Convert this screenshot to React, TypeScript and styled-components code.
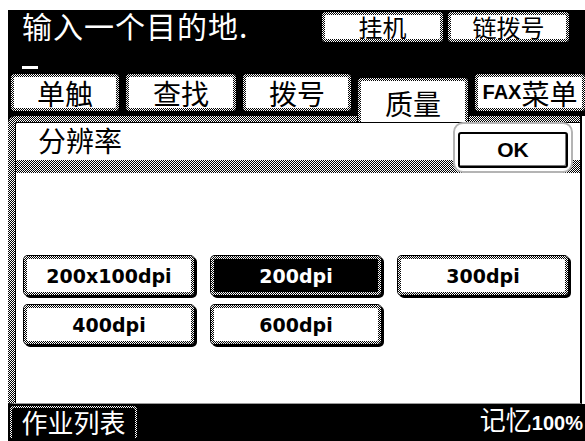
import styled, { createGlobalStyle } from "styled-components";

const CHECKER = "conic-gradient(#000 0 25%, #fff 0 50%, #000 0 75%, #fff 0) 0 0 / 2px 2px";
const CJK = `"Noto Sans CJK SC", sans-serif`;
const LATIN = `"Liberation Sans", Arial, sans-serif`;

const GlobalStyle = createGlobalStyle`
  html, body {
    margin: 0;
    padding: 0;
    background: #fff;
    overflow: hidden;
  }
`;

const Screen = styled.div`
  margin: 10px 0 0 8px;
  width: 577px;
  height: 431px;
  background: #000;
  display: flex;
  flex-direction: column;
  font-family: ${CJK};
`;

const TopBar = styled.div`
  height: 56px;
  flex-shrink: 0;
  display: flex;
  align-items: flex-start;
`;

const Prompt = styled.div`
  color: #fff;
  font-size: 30px;
  line-height: 42px;
  margin-top: -6px;
  padding-left: 14px;
  letter-spacing: 1px;
`;

const TopKeys = styled.div`
  margin-left: auto;
  margin-right: 16px;
  margin-top: 2px;
  display: flex;
  gap: 5px;
`;

const Key = styled.div<{ $w: number; $h: number; $dark?: boolean }>`
  box-sizing: border-box;
  width: ${(p) => p.$w}px;
  height: ${(p) => p.$h}px;
  border: 3px solid transparent;
  border-radius: 4px;
  background:
    linear-gradient(${(p) => (p.$dark ? "#000" : "#fff")}, ${(p) => (p.$dark ? "#000" : "#fff")}) padding-box,
    ${CHECKER} border-box;
  box-shadow: 0 0 0 1px #000, 2px 2px 0 1px #000;
  color: ${(p) => (p.$dark ? "#fff" : "#000")};
  display: flex;
  align-items: center;
  justify-content: center;
  white-space: nowrap;
`;

const CjkLabel = styled.span<{ $size?: number }>`
  font-family: ${CJK};
  font-size: ${(p) => p.$size ?? 28}px;
  line-height: 1;
`;

const Cursor = styled.div`
  width: 16px;
  height: 3px;
  flex-shrink: 0;
  background: #fff;
  margin: 0 0 4px 14px;
`;

const TabRow = styled.div`
  height: 43px;
  flex-shrink: 0;
  display: flex;
  align-items: flex-start;
  gap: 7px;
  padding-left: 3px;
`;

const Tab = styled(Key)`
  margin-top: 1px;
`;

const ActiveTab = styled.div`
  position: relative;
  z-index: 2;
  box-sizing: border-box;
  width: 110px;
  height: 44px;
  margin-top: 5px;
  border: 3px solid transparent;
  border-bottom: 0;
  border-radius: 4px 4px 0 0;
  background: linear-gradient(#fff, #fff) padding-box, ${CHECKER} border-box;
  box-shadow: 0 -1px 0 #000, -1px 0 0 #000, 1px 0 0 #000;
  display: flex;
  align-items: center;
  justify-content: center;
  padding-top: 2px;
`;

const FaxLabel = styled.span`
  font-family: ${LATIN};
  font-weight: bold;
  font-size: 20px;
`;

const Panel = styled.div`
  box-sizing: border-box;
  width: 574px;
  height: 288px;
  flex-shrink: 0;
  border-top: 6px solid transparent;
  border-left: 7px solid transparent;
  border-right: 2px solid #000;
  border-bottom: 1px solid #9a9a9a;
  border-top-left-radius: 8px;
  background: linear-gradient(#fff, #fff) padding-box, ${CHECKER} border-box;
  box-shadow: inset 1px 1px 0 #000, 3px 0 0 #fff;
`;

const PanelHead = styled.div`
  display: grid;
  grid-template-columns: 1fr 120px 7px;
  grid-template-rows: 38px 13px;
`;

const PanelTitle = styled.div`
  grid-row: 1;
  grid-column: 1;
  padding-left: 23px;
  font-size: 28px;
  line-height: 36px;
  color: #000;
`;

const Band = styled.div`
  grid-row: 2;
  grid-column: 1 / -1;
  margin-left: 1px;
  background: ${CHECKER};
`;

const OkRing = styled.div`
  grid-row: 1 / 3;
  grid-column: 2;
  z-index: 1;
  box-sizing: border-box;
  border: 2px solid #b4b4b4;
  border-radius: 10px;
  background: #fff;
  padding: 8px 3px 3px 3px;
  display: flex;
`;

const OkKey = styled.div`
  flex: 1;
  border: 2px solid #000;
  border-radius: 3px;
  box-shadow: inset -1px -1px 0 #777;
  display: flex;
  align-items: center;
  justify-content: center;
  font-family: ${LATIN};
  font-weight: bold;
  font-size: 21px;
  color: #000;
`;

const Choices = styled.div`
  display: grid;
  grid-template-columns: repeat(3, 170px);
  column-gap: 17px;
  row-gap: 10px;
  margin-top: 83px;
  padding-left: 9px;
`;

const DpiLabel = styled.span`
  font-family: "DejaVu Sans", sans-serif;
  font-weight: bold;
  font-size: 19px;
`;

const BottomBar = styled.div`
  flex: 1;
  min-height: 0;
  display: flex;
  align-items: flex-start;
  justify-content: space-between;
  padding-top: 2px;
`;

const JobKey = styled.div`
  box-sizing: border-box;
  width: 127px;
  height: 32px;
  margin-left: 2px;
  border: 2px solid transparent;
  border-bottom: 0;
  border-radius: 4px 4px 0 0;
  background: linear-gradient(#000, #000) padding-box, ${CHECKER} border-box;
  color: #fff;
  display: flex;
  justify-content: center;
  font-size: 26px;
  line-height: 28px;
`;

const Memory = styled.div`
  color: #fff;
  display: flex;
  align-items: baseline;
  padding-right: 2px;
  line-height: 28px;
`;

const MemoryPct = styled.span`
  font-family: ${LATIN};
  font-weight: bold;
  font-size: 20px;
`;

const resolutions = ["200x100dpi", "200dpi", "300dpi", "400dpi", "600dpi"];

export default function App() {
  return (
    <>
      <GlobalStyle />
      <Screen>
        <TopBar>
          <Prompt>输入一个目的地.</Prompt>
          <TopKeys>
            <Key $w={121} $h={30}>
              <CjkLabel $size={24}>挂机</CjkLabel>
            </Key>
            <Key $w={121} $h={30}>
              <CjkLabel $size={24}>链拨号</CjkLabel>
            </Key>
          </TopKeys>
        </TopBar>
        <Cursor />
        <TabRow>
          <Tab $w={108} $h={37}>
            <CjkLabel>单触</CjkLabel>
          </Tab>
          <Tab $w={110} $h={37}>
            <CjkLabel>查找</CjkLabel>
          </Tab>
          <Tab $w={108} $h={37}>
            <CjkLabel>拨号</CjkLabel>
          </Tab>
          <ActiveTab>
            <CjkLabel>质量</CjkLabel>
          </ActiveTab>
          <Tab $w={110} $h={37}>
            <FaxLabel>FAX</FaxLabel>
            <CjkLabel>菜单</CjkLabel>
          </Tab>
        </TabRow>
        <Panel>
          <PanelHead>
            <PanelTitle>分辨率</PanelTitle>
            <Band />
            <OkRing>
              <OkKey>OK</OkKey>
            </OkRing>
          </PanelHead>
          <Choices>
            {resolutions.map((r) => (
              <Key key={r} $w={170} $h={39} $dark={r === "200dpi"}>
                <DpiLabel>{r}</DpiLabel>
              </Key>
            ))}
          </Choices>
        </Panel>
        <BottomBar>
          <JobKey>作业列表</JobKey>
          <Memory>
            <CjkLabel $size={26}>记忆</CjkLabel>
            <MemoryPct>100%</MemoryPct>
          </Memory>
        </BottomBar>
      </Screen>
    </>
  );
}
